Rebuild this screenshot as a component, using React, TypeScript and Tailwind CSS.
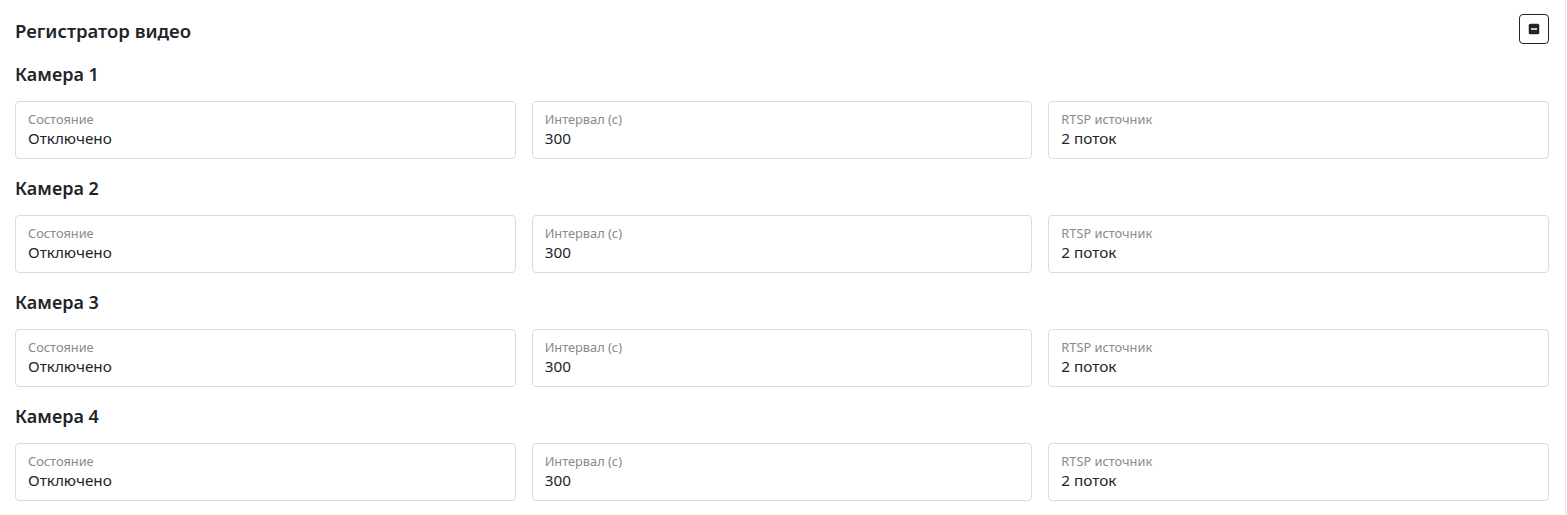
import React from 'react'

const cameras = [1, 2, 3, 4]

function Field({ label, value }: { label: string; value: string }) {
  return (
    <div className="flex h-[58px] flex-col justify-center rounded-[4px] border border-[#dcdcdc] bg-white px-[12px] pb-[2px]">
      <span className="text-[12.8px] leading-[17px] text-[#8a8a8a]">{label}</span>
      <span className="text-[15.3px] leading-[20px] text-[#212529]">{value}</span>
    </div>
  )
}

export default function App() {
  return (
    <div className="h-[515px] w-[1566px] overflow-hidden border-r border-[#e6e6e6] bg-white font-['Noto_Sans',sans-serif]">
      <div className="pl-[15px] pr-[16px]">
        {/* Header */}
        <div className="flex h-[43px] items-end justify-between">
          <h2 className="text-[18.5px] leading-[24px] font-semibold text-[#212529]">Регистратор видео</h2>
          <button className="mb-[-1px] flex h-[30px] w-[30px] items-center justify-center rounded-[4px] border border-[#212529] bg-white">
            <svg width="12" height="12" viewBox="0 0 16 16">
              <rect x="1" y="1" width="14" height="14" rx="2" fill="#212529" />
              <rect x="4" y="7" width="8" height="2" fill="#ffffff" />
            </svg>
          </button>
        </div>

        {cameras.map((n, i) => (
          <div key={n} className={i === 0 ? 'pt-[19px]' : 'pt-[17px]'}>
            <h3 className="text-[18px] leading-[24px] font-semibold text-[#212529]">Камера {n}</h3>
            <div className="mt-[15px] grid grid-cols-3 gap-[16px]">
              <Field label="Состояние" value="Отключено" />
              <Field label="Интервал (с)" value="300" />
              <Field label="RTSP источник" value="2 поток" />
            </div>
          </div>
        ))}
      </div>
    </div>
  )
}
